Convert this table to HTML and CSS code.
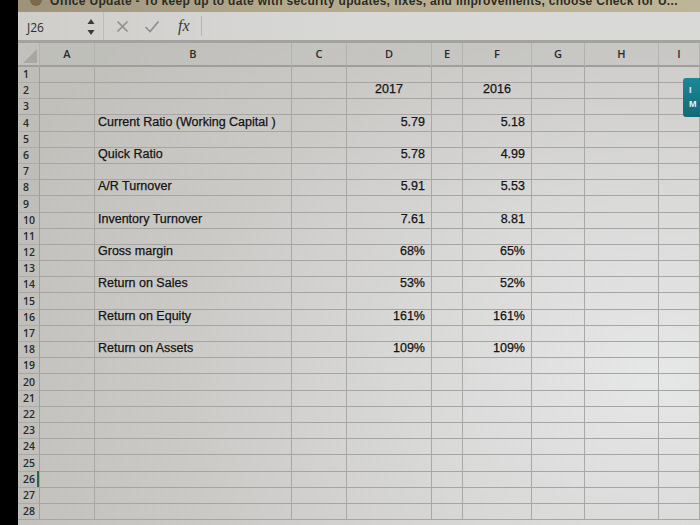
FILE: index.html
```html
<!DOCTYPE html>
<html>
<head>
<meta charset="utf-8">
<link rel="stylesheet" href="styles.css">
</head>
<body>
<div class="screen">
  <div class="notice"><span class="notice-icon"></span><span class="notice-text">Office Update - To keep up to date with security updates, fixes, and improvements, choose Check for U...</span></div>
  <div class="formula">
    <div class="namebox"><span class="name">J26</span>
      <svg class="spin" width="8" height="18" viewBox="0 0 8 18"><path d="M4 1 L7.5 6 L0.5 6 Z" fill="#3a3a3a"/><path d="M0.5 12 L7.5 12 L4 17 Z" fill="#3a3a3a"/></svg>
    </div>
    <div class="fbtns">
      <svg width="13" height="13" viewBox="0 0 13 13"><path d="M1.5 1.5 L11.5 11.5 M11.5 1.5 L1.5 11.5" stroke="#8d8d8b" stroke-width="1.6" fill="none"/></svg>
      <svg width="16" height="13" viewBox="0 0 16 13"><path d="M1.5 7 L6 11.5 L14.5 1.5" stroke="#8d8d8b" stroke-width="1.6" fill="none"/></svg>
      <span class="fx">fx</span>
    </div>
    <div class="fin"></div>
  </div>
  <div class="sheet">
    <div class="row head"><div class="corner"><span></span></div><div>A</div><div>B</div><div>C</div><div>D</div><div>E</div><div>F</div><div>G</div><div>H</div><div>I</div></div>
    <div class="row"><div class="rh">1</div><div></div><div></div><div></div><div></div><div></div><div></div><div></div><div></div><div></div></div>
    <div class="row"><div class="rh">2</div><div></div><div></div><div></div><div class="h">2017</div><div></div><div class="h">2016</div><div></div><div></div><div></div></div>
    <div class="row"><div class="rh">3</div><div></div><div></div><div></div><div></div><div></div><div></div><div></div><div></div><div></div></div>
    <div class="row"><div class="rh">4</div><div></div><div class="t">Current Ratio (Working Capital )</div><div></div><div class="n">5.79</div><div></div><div class="n">5.18</div><div></div><div></div><div></div></div>
    <div class="row"><div class="rh">5</div><div></div><div></div><div></div><div></div><div></div><div></div><div></div><div></div><div></div></div>
    <div class="row"><div class="rh">6</div><div></div><div class="t">Quick Ratio</div><div></div><div class="n">5.78</div><div></div><div class="n">4.99</div><div></div><div></div><div></div></div>
    <div class="row"><div class="rh">7</div><div></div><div></div><div></div><div></div><div></div><div></div><div></div><div></div><div></div></div>
    <div class="row"><div class="rh">8</div><div></div><div class="t">A/R Turnover</div><div></div><div class="n">5.91</div><div></div><div class="n">5.53</div><div></div><div></div><div></div></div>
    <div class="row"><div class="rh">9</div><div></div><div></div><div></div><div></div><div></div><div></div><div></div><div></div><div></div></div>
    <div class="row"><div class="rh">10</div><div></div><div class="t">Inventory Turnover</div><div></div><div class="n">7.61</div><div></div><div class="n">8.81</div><div></div><div></div><div></div></div>
    <div class="row"><div class="rh">11</div><div></div><div></div><div></div><div></div><div></div><div></div><div></div><div></div><div></div></div>
    <div class="row"><div class="rh">12</div><div></div><div class="t">Gross margin</div><div></div><div class="n">68%</div><div></div><div class="n">65%</div><div></div><div></div><div></div></div>
    <div class="row"><div class="rh">13</div><div></div><div></div><div></div><div></div><div></div><div></div><div></div><div></div><div></div></div>
    <div class="row"><div class="rh">14</div><div></div><div class="t">Return on Sales</div><div></div><div class="n">53%</div><div></div><div class="n">52%</div><div></div><div></div><div></div></div>
    <div class="row"><div class="rh">15</div><div></div><div></div><div></div><div></div><div></div><div></div><div></div><div></div><div></div></div>
    <div class="row"><div class="rh">16</div><div></div><div class="t">Return on Equity</div><div></div><div class="n">161%</div><div></div><div class="n">161%</div><div></div><div></div><div></div></div>
    <div class="row"><div class="rh">17</div><div></div><div></div><div></div><div></div><div></div><div></div><div></div><div></div><div></div></div>
    <div class="row"><div class="rh">18</div><div></div><div class="t">Return on Assets</div><div></div><div class="n">109%</div><div></div><div class="n">109%</div><div></div><div></div><div></div></div>
    <div class="row"><div class="rh">19</div><div></div><div></div><div></div><div></div><div></div><div></div><div></div><div></div><div></div></div>
    <div class="row"><div class="rh">20</div><div></div><div></div><div></div><div></div><div></div><div></div><div></div><div></div><div></div></div>
    <div class="row"><div class="rh">21</div><div></div><div></div><div></div><div></div><div></div><div></div><div></div><div></div><div></div></div>
    <div class="row"><div class="rh">22</div><div></div><div></div><div></div><div></div><div></div><div></div><div></div><div></div><div></div></div>
    <div class="row"><div class="rh">23</div><div></div><div></div><div></div><div></div><div></div><div></div><div></div><div></div><div></div></div>
    <div class="row"><div class="rh">24</div><div></div><div></div><div></div><div></div><div></div><div></div><div></div><div></div><div></div></div>
    <div class="row"><div class="rh">25</div><div></div><div></div><div></div><div></div><div></div><div></div><div></div><div></div><div></div></div>
    <div class="row"><div class="rh sel">26</div><div></div><div></div><div></div><div></div><div></div><div></div><div></div><div></div><div></div></div>
    <div class="row"><div class="rh">27</div><div></div><div></div><div></div><div></div><div></div><div></div><div></div><div></div><div></div></div>
    <div class="row"><div class="rh">28</div><div></div><div></div><div></div><div></div><div></div><div></div><div></div><div></div><div></div></div>
  </div>
  <div class="pane-btn">I<br>M</div>
</div>
</body>
</html>
```
FILE: styles.css
```css
html, body {
  margin: 0;
  padding: 0;
  background: #000;
  width: 700px;
  height: 525px;
  overflow: hidden;
}
.screen {
  position: relative;
  margin-left: 18px;
  width: 682px;
  height: 525px;
  background: #d4d4d2;
  font-family: "Liberation Sans", Arial, sans-serif;
}
.notice {
  height: 12px;
  overflow: hidden;
  background: linear-gradient(to right, #9c937a, #b3aa8e 40%, #bdb597);
  display: flex;
  align-items: flex-end;
  gap: 8px;
  padding-left: 12px;
}
.notice-icon {
  width: 12px;
  height: 12px;
  border-radius: 50%;
  background: #7a6a4a;
  margin-bottom: 6px;
  flex: none;
}
.notice-text {
  font-size: 12px;
  font-weight: bold;
  color: #2e2b25;
  white-space: nowrap;
  line-height: 12px;
  margin-bottom: 5px;
  letter-spacing: 0.3px;
}
.formula {
  height: 28px;
  display: flex;
  align-items: center;
  background: linear-gradient(to right, #cfcecb, #d8d8d6 50%, #d9d9d8);
  border-bottom: 3px solid #a3a29f;
}
.namebox {
  width: 86px;
  height: 28px;
  display: flex;
  align-items: center;
  justify-content: space-between;
  padding: 0 8px 0 9px;
  box-sizing: border-box;
  border-right: 1px solid #bdbcba;
}
.name {
  font-family: "Open Sans", "Noto Sans", sans-serif;
  font-size: 12px;
  color: #2e2e2e;
  padding-top: 2px;
}
.spin { margin-top: 1px; }
.fbtns {
  display: flex;
  align-items: center;
  gap: 15px;
  padding-left: 12px;
  width: 98px;
  height: 20px;
  box-sizing: border-box;
  border-right: 1px solid #b5b4b2;
}
.fx {
  font-family: "Liberation Serif", "Times New Roman", serif;
  font-style: italic;
  font-size: 16px;
  color: #3a3a3a;
  margin-left: 3px;
}
.fin { flex: 1; }
.sheet {
  background: radial-gradient(ellipse 700px 520px at 640px 330px, #e6e7e7 0%, #d9d9d8 35%, #cac9c6 70%, #c1c0bb 100%);
  height: 482px;
  overflow: hidden;
}
.row {
  display: grid;
  grid-template-columns: 22px 55px 197px 55px 85px 31px 69px 53px 74px 41px;
  height: 16.2px;
}
.row > div {
  border-right: 1px solid #a9a8a4;
  border-bottom: 1px solid #a6a5a1;
  box-sizing: border-box;
  font-size: 12.5px;
  line-height: 15px;
  color: #141414;
  -webkit-text-stroke: 0.25px #141414;
  white-space: nowrap;
  overflow: visible;
}
.row.head {
  height: 23px;
  background: rgba(190,189,185,0.35);
}
.row.head > div {
  font-family: "Open Sans", "Noto Sans", sans-serif;
  font-size: 11px;
  font-weight: 600;
  -webkit-text-stroke: 0;
  line-height: 22px;
  text-align: center;
  color: #2b2b2b;
  border-right-color: #b3b2ae;
  border-bottom: 2px solid #9f9e9a;
}
.row.head > .corner {
  position: relative;
  background: #c2c1bd;
}
.corner span {
  position: absolute;
  right: 2px;
  bottom: 2px;
  width: 0;
  height: 0;
  border-left: 14px solid transparent;
  border-bottom: 14px solid #a8a7a3;
}
.row > .rh {
  font-family: "Open Sans", "Noto Sans", sans-serif;
  font-size: 10.5px;
  font-weight: 600;
  -webkit-text-stroke: 0;
  line-height: 16px;
  color: #2a2a2a;
  padding-left: 5px;
  background: rgba(185,184,180,0.35);
  border-right-color: #a09f9b;
}
.row > .rh.sel {
  box-shadow: inset -2px 0 0 #2a6b45;
}
.row > .t { padding-left: 3px; }
.row > .n { text-align: right; padding-right: 6px; }
.row > .h { text-align: center; }
.pane-btn {
  position: absolute;
  left: 665px;
  top: 78px;
  width: 30px;
  height: 39px;
  background: linear-gradient(to bottom, #1b8797, #136a78);
  border-radius: 3px;
  color: #e8f3f5;
  font-size: 9px;
  font-weight: bold;
  line-height: 14px;
  padding: 5px 0 0 6px;
  box-sizing: border-box;
}
```
